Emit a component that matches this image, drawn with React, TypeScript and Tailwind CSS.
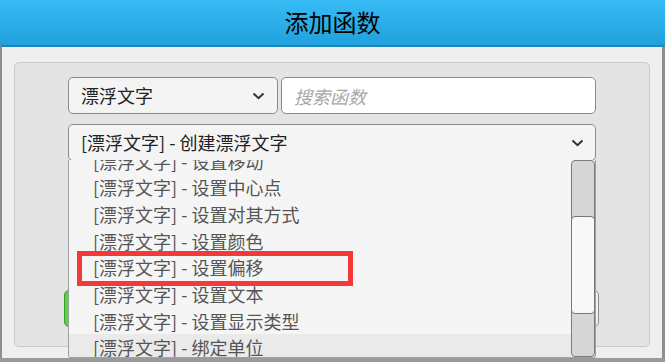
import { useState } from "react";

const items = [
  "[漂浮文字] - 设置移动",
  "[漂浮文字] - 设置中心点",
  "[漂浮文字] - 设置对其方式",
  "[漂浮文字] - 设置颜色",
  "[漂浮文字] - 设置偏移",
  "[漂浮文字] - 设置文本",
  "[漂浮文字] - 设置显示类型",
  "[漂浮文字] - 绑定单位",
];

function Chevron() {
  return (
    <svg width="13" height="8" viewBox="0 0 13 8" className="shrink-0">
      <polyline points="1.5,1.5 6.5,6.2 11.5,1.5" fill="none" stroke="#333" strokeWidth="2" />
    </svg>
  );
}

const App = () => {
  const [search, setSearch] = useState("");

  return (
    <div className="w-[665px] h-[362px] bg-[#9a9a9a] font-['Noto_Sans_CJK_SC',sans-serif] overflow-hidden">
      <div className="h-[47px] flex items-center justify-center rounded-b-[3px] bg-gradient-to-b from-[#36bbf5] to-[#20a1dd] border-b-2 border-[#1a86bb]">
        <span className="text-[24px] leading-none text-black pb-[2px]">添加函数</span>
      </div>
      <div className="h-[311px] bg-[#efefef] border-l-2 border-r-[3px] border-[#8f8f8f] pt-[15px] px-[12px]">
        <div className="h-[285px] bg-[#e4e4e4] border border-[#cacaca] rounded-[5px] pt-[14px] px-[53px]">
          <div className="flex gap-[3px]">
            <div className="w-[210px] h-[37px] flex items-center justify-between px-[12px] bg-[#f4f4f4] border border-[#8a8a8a] rounded-[5px] text-[18px] text-[#222]">
              <span>漂浮文字</span>
              <Chevron />
            </div>
            <input
              value={search}
              onChange={(e) => setSearch(e.target.value)}
              placeholder="搜索函数"
              className="flex-1 h-[37px] px-[12px] bg-white border border-[#8a8a8a] rounded-[5px] text-[18px] italic outline-none placeholder:text-[#a8a8a8]"
            />
          </div>
          <div className="relative mt-[10px]">
            <div className="h-[37px] flex items-center justify-between pl-[12px] pr-[11px] bg-[#f4f4f4] border border-[#8a8a8a] rounded-[5px] text-[18px] text-[#222]">
              <span>[漂浮文字] - 创建漂浮文字</span>
              <Chevron />
            </div>
            <div className="absolute left-0 right-0 top-[36px] h-[198px] flex bg-[#f5f5f5] border-x border-b border-[#a0a0a0] rounded-b-[3px] overflow-hidden z-10">
              <div className="flex-1 overflow-hidden">
                <div className="-mt-[12.5px]">
                  {items.map((t, i) => (
                    <div
                      key={i}
                      className={`h-[26.67px] flex items-center pl-[24px] text-[18px] leading-none text-[#555] ${i === items.length - 1 ? "bg-[#eaeaea]" : ""}`}
                    >
                      {t}
                    </div>
                  ))}
                </div>
              </div>
              <div className="relative w-[24px] h-full bg-[#d6d6d6] border border-[#7c7c7c] rounded-[4px]">
                <div className="absolute left-[-1px] right-[-1px] top-[55px] h-[98px] bg-[#f8f8f8] border border-[#777] rounded-[4px]" />
              </div>
              <div className="absolute left-[8px] top-[91px] w-[276px] h-[35px] border-[5px] border-[#f33a3a]" />
            </div>
          </div>
          <div className="flex justify-between -mx-[4px] -mr-[3px] mt-[129px]">
            <button className="w-[260px] h-[37px] bg-[#5ad43e] border border-[#3a9a2a] rounded-[5px] text-white text-[18px]">确定</button>
            <button className="w-[260px] h-[37px] bg-[#f2f2f2] border border-[#8a8a8a] rounded-[5px] text-[#222] text-[18px]">取消</button>
          </div>
        </div>
      </div>
    </div>
  );
};

export default App;
